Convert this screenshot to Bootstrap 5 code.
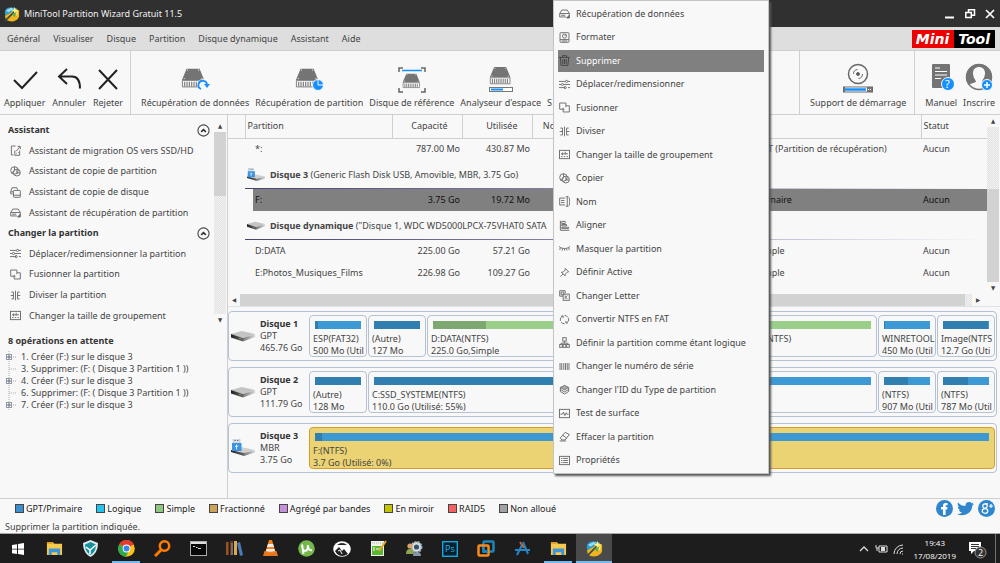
<!DOCTYPE html>
<html lang="fr">
<head>
<meta charset="utf-8">
<meta name="viewport" content="width=device-width, initial-scale=1">
<title>MiniTool Partition Wizard Gratuit 11.5</title>
<link href="https://cdn.jsdelivr.net/npm/bootstrap@5.3.0/dist/css/bootstrap.min.css" rel="stylesheet">
<style>
  :root { --ink: #444; --line: #cfcfcf; --paper: #f8f8f8; --frame: #b4c2d6; }
  body { font-family: "Noto Sans", "DejaVu Sans Condensed", sans-serif; font-size: 9px; line-height: 12px; color: var(--ink); background: var(--paper); }
  button { background: none; border: 0; padding: 0; color: inherit; font: inherit; white-space: nowrap; }
  svg { display: block; flex: none; }
  a { color: inherit; text-decoration: none; }
  .title-bar { background: #303030; color: #f2f2f2; height: 27px; }
  .menu-bar { background: #dedede; height: 24px; gap: 13px; padding: 0 5px 0 7px; border-bottom: 1px solid var(--line); }
  .brand { font: italic bold 14px/18px "DejaVu Sans", sans-serif; color: #fff; }
  .brand span { padding: 0 5px 0 4px; }
  .brand-red { background: #ec0000; }
  .brand-black { background: #000; }
  .tool-bar { height: 64px; border-bottom: 1px solid var(--line); }
  .tool-set { border-right: 1px solid var(--line); }
  .tool-first { padding: 0 7px 0 4px; gap: 7px; }
  .tool-mid { padding-left: 10px; gap: 6px; }
  .tool-end { padding: 0 8px 0 10px; }
  .tool-last { padding: 0 5px 0 10px; gap: 6px; }
  .tool-btn { display: flex; flex-direction: column; align-items: center; justify-content: flex-end; padding-bottom: 5px; gap: 4px; }
  .side { width: 228px; border-right: 1px solid var(--line); }
  .side-scroll { height: 206px; margin-top: 5px; }
  .side-row { display: flex; align-items: center; flex: 1; padding: 0 4px 0 8px; gap: 8px; }
  .side-row .glyph { margin-left: 2px; }
  .side-row .fold-icon { width: 13px; height: 13px; }
  .side h2, .side h3 { font-size: 9px; line-height: 12px; font-weight: bold; margin: 0; color: #333; }
  .side h3 { padding: 9px 8px 4px; }
  .track { background: repeating-conic-gradient(#e2e2e2 0 25%, #f2f2f2 0 50%) 0 0/2px 2px; }
  .thumb { background: #d2d2d2; }
  .v-bar { width: 12px; display: flex; flex-direction: column; }
  .v-bar-main { margin-right: 1px; }
  .arrow { display: flex; align-items: center; justify-content: center; width: 12px; height: 12px; font-size: 6px; flex: none; }
  .ops { list-style: none; margin: 0; padding: 0 0 0 5px; }
  .ops li { display: flex; gap: 4px; align-items: center; }
  .part-table { table-layout: fixed; margin: 0 0 10px; color: var(--ink); --bs-table-bg: transparent; }
  .part-table th, .part-table td { padding: 0 2px; border: 0; height: 22px; vertical-align: middle; white-space: nowrap; overflow: hidden; color: inherit; font-weight: normal; }
  .part-table thead th { border-right: 1px solid var(--line); border-bottom: 1px solid var(--line); height: 23px; }
  .part-table thead th:last-child { border-right: 0; }
  .part-table thead .plain { border-right: 0; }
  .part-table .num { text-align: right; }
  .part-table thead .num { padding-right: 14px; }
  .part-table .kind { padding-left: 7px; }
  .part-table .group td { height: 29px; background: linear-gradient(90deg, #45436f, #8884b0 45%, #d5d5e6 80%, #f8f8f8) left bottom/100% 1px no-repeat; box-shadow: none; overflow: visible; }
  .part-table .group td:first-child { background: none; }
  .part-table .chosen { color: #111; }
  .part-table .chosen td:nth-child(n+3) { background: #808080; }
  .drive-line { gap: 5px; }
  .maps { gap: 6px; padding: 4px 3px 0 0; }
  .disk { height: 50px; border: 1px solid var(--frame); border-radius: 4px; padding: 3px 1px 3px 2px; }
  .disk-info { width: 78px; gap: 5px; flex: none; }
  .disk-info b { color: #333; }
  .vols { flex: 1; min-width: 0; gap: 1px; }
  .vol { border: 1px solid var(--frame); border-radius: 4px; padding: 5px 3px 0; overflow: hidden; white-space: nowrap; }
  .vol-small { width: 58px; flex: none; }
  .vol-wide { flex: 1 1 0; min-width: 0; }
  .vol-active { background: #ebd273; border-color: #d99c22; }
  .usage { height: 8px; margin: 0 2px 4px; background: #3d99d4; }
  .usage div { height: 8px; background: #307fae; }
  .usage-simple { background: #99cf89; }
  .usage-simple div { background: #7da970; }
  .legend { height: 20px; gap: 14px; padding: 0 5px 0 15px; border-top: 1px solid var(--line); color: #222; }
  .legend-item { display: flex; align-items: center; gap: 2px; }
  .swatch { width: 9px; height: 9px; border: 1px solid #444; }
  .status-line { height: 16px; padding: 2px 0 0 5px; border-bottom: 1px solid #aaa; }
  .task-bar { background: #1d1d1d; height: 29px; color: #fff; font-family: "Open Sans", sans-serif; font-size: 8px; line-height: 13px; }
  .task-btn { width: 36px; flex: none; display: flex; align-items: center; justify-content: center; padding: 0 4px; }
  .task-open { background: linear-gradient(#76b9ed, #76b9ed) center bottom/28px 2px no-repeat; }
  .task-now { background: linear-gradient(#76b9ed, #76b9ed) center bottom/36px 2px no-repeat #4a4a4a; }
  .context.show { position: absolute; left: 553px; top: 0; width: 216px; height: 474px; display: flex; flex-direction: column; padding: 1px 4px; background: var(--paper); border: 1px solid #c4c4c4; border-radius: 0; box-shadow: 2px 2px 2px #555; font-size: 9px; color: var(--ink); }
  .context li { flex: 1; display: flex; align-items: center; }
  .context .dropdown-item { display: flex; align-items: center; gap: 6px; height: 22px; padding: 0 1px; color: var(--ink); }
  .context .dropdown-item.active { background: #808080; color: #fff; }
  .glyph { width: 11px; height: 11px; fill: none; stroke: #6e6e6e; stroke-width: 1.4; }
  .active .glyph { stroke: #444; }
</style>
</head>
<body class="d-flex flex-column min-vh-100 overflow-hidden">
<svg width="0" height="0" class="position-absolute" aria-hidden="true">
  <defs>
    <linearGradient id="metal"><stop stop-color="#777"/><stop offset="1" stop-color="#d8d8d8"/></linearGradient>
    <linearGradient id="front"><stop stop-color="#222"/><stop offset="1" stop-color="#666"/></linearGradient>
    <symbol id="i-recover" viewBox="0 0 16 16"><path d="M1 8 4 3h8l3 5M1 8h14M1 8v5h9M15 8v4M3 10.500h6"/><path d="M11 14.500l4-4v4z" fill="#555"/></symbol>
    <symbol id="i-format" viewBox="0 0 16 16"><rect x="1.500" y="1" width="13" height="14" rx="1"/><circle cx="8" cy="6" r="3"/><path d="M8 6l2-2M1.500 11h13M4 13h8"/></symbol>
    <symbol id="i-trash" viewBox="0 0 16 16"><path d="M0 3.500h16M5 3V1h6v2M2 4l1 11h10l1-11M5.500 6v7M8 6v7M10.500 6v7"/></symbol>
    <symbol id="i-slide" viewBox="0 0 16 16"><path d="M0 3.500h9M13 3.500h3M0 8h3M7 8h9M0 12.500h9M13 12.500h3"/><circle cx="11" cy="3.500" r="1.600"/><circle cx="5" cy="8" r="1.600"/><circle cx="9" cy="12.500" r="1.600"/></symbol>
    <symbol id="i-merge" viewBox="0 0 16 16"><path d="M1 1.500h9v4h5v9H6v-4H1zM6 8.500v2h2M10 5.500v2"/></symbol>
    <symbol id="i-split" viewBox="0 0 16 16"><path d="M8 1v14M2 3h3v10H2M14 3h-3v10h3M1 8h4M11 8h4"/></symbol>
    <symbol id="i-cluster" viewBox="0 0 16 16"><rect x=".7" y="2" width="14.600" height="12"/><path d="M3 7h10M5 5v4M9 4v4M3 11h2M7 11h2M11 11h2"/></symbol>
    <symbol id="i-copy" viewBox="0 0 16 16"><circle cx="6.500" cy="6.500" r="5.500"/><circle cx="10" cy="9.500" r="5"/><path d="M6.500 1v6l-4 3M10 5v5h5"/></symbol>
    <symbol id="i-disks" viewBox="0 0 16 16"><path d="M4 10H1V7l2-6h7l1 3"/><rect x="5" y="5" width="10" height="10" rx="1"/><path d="M5 12h10M1 7h4"/></symbol>
    <symbol id="i-migrate" viewBox="0 0 16 16"><path d="M8 1.500H2v13h3M7 8v7h7V8M9 12h1M12 11h1M9 9l5-6M11 2h4v4"/></symbol>
    <symbol id="i-name" viewBox="0 0 16 16"><path d="M9 3H1v10h8M3 6.500h5M3 9.500h5M10 1h4M10 15h4M12 1v14M14 3h1.500v10H14"/></symbol>
    <symbol id="i-align" viewBox="0 0 16 16"><path d="M2 1v14h13M4 2h5v3H4zM4 6.500h7v2H4zM4 10.500h10v2H4z"/></symbol>
    <symbol id="i-hide" viewBox="0 0 16 16"><path d="M0 5c4 4 12 4 16 0M2 7l-1 3M5 8l-.5 3M8 8.500V11M11 8l.5 3M14 7l1 3"/></symbol>
    <symbol id="i-pin" viewBox="0 0 16 16"><path d="M9 2l5 5-2 .5-3 3V13L3.500 7.500H6l3-3zM6 10l-4 4"/></symbol>
    <symbol id="i-letter" viewBox="0 0 16 16"><path d="M6 9H1V1h8v4M3 3h4v4H3z"/><rect x="6" y="6" width="9" height="9"/><path d="M9 8v5M12 8l-2 2.500 2 2.500"/></symbol>
    <symbol id="i-cycle" viewBox="0 0 16 16"><path d="M2 10A6 6 0 0 1 5 3M3 3h3v3M14 6a6 6 0 0 1-3 7M13 13h-3v-3M8 2a6 6 0 0 1 5 3M8 14a6 6 0 0 1-5-2"/></symbol>
    <symbol id="i-tree" viewBox="0 0 16 16"><rect x="5.500" y="1" width="5" height="5"/><path d="M8 6v3M3 11V9h10v2"/><rect x="1" y="11" width="4" height="4"/><rect x="6" y="11" width="4" height="4"/><rect x="11" y="11" width="4" height="4"/></symbol>
    <symbol id="i-bars" viewBox="0 0 16 16"><path d="M1.500 3v10M4 3v10M7 3v10M9.500 3v10M12 3v10M14.500 3v10"/></symbol>
    <symbol id="i-layers" viewBox="0 0 16 16"><path d="M8 2l6 3-6 3.500L2 5z" fill="#aaa"/><path d="M2 8l6 3.500L14 8M2 11l6 3.500 6-3.500M2 5v6M14 5v6"/></symbol>
    <symbol id="i-surface" viewBox="0 0 16 16"><rect x=".7" y="2" width="14.600" height="12"/><path d="M2 9h3l1.500-3 2 5 2-4 1 2H14"/></symbol>
    <symbol id="i-wipe" viewBox="0 0 16 16"><path d="M9 2l6 3-6 8H4l-2-3zM5 6l6 4M1 14.500h9"/></symbol>
    <symbol id="i-props" viewBox="0 0 16 16"><rect x=".7" y="2" width="14.600" height="12"/><path d="M3 5h2M6 5h7M3 8h2M6 8h7M3 11h2M6 11h7"/></symbol>
    <symbol id="i-fold" viewBox="0 0 14 14"><circle cx="7" cy="7" r="6" stroke="#444" stroke-width="1.200"/><path d="M4.500 8.500 7 6l2.500 2.500" stroke="#333" stroke-width="1.800"/></symbol>
    <symbol id="i-plus" viewBox="0 0 12 12"><path d="M8 6h4M4 0v3M4 10v2" stroke="#aaa" stroke-dasharray="1 1"/><rect x="1.500" y="3.500" width="5" height="5" fill="#fff" stroke="#999"/><path d="M2 6h4M4 4v4" stroke="#5564a0"/></symbol>
    <symbol id="i-leaf" viewBox="0 0 12 12"><path d="M4 0v12M4 6h8" stroke="#aaa" stroke-dasharray="1 1"/></symbol>
    <symbol id="i-hdd" viewBox="0 0 24 12"><path d="M0 4 11 1l13 3-12 4z" fill="#c4c4c4"/><path d="M0 4l12 4v3.500L0 7.500z" fill="url(#front)"/><path d="M12 8l12-4v3l-12 4.500z" fill="url(#metal)"/><path d="M8 8.500h2" stroke="#4fae4a"/></symbol>
    <symbol id="i-usb" viewBox="0 0 24 18"><path d="M0 10l10-2 14 3-11 3z" fill="#cfcfcf"/><path d="M0 11l13 3v3L0 13z" fill="url(#front)"/><path d="M13 14l11-3v2.500L13 17z" fill="url(#metal)"/><rect x="2" y="0" width="7" height="4" fill="#d7e4ee" stroke="#a7b7c5" stroke-width=".5"/><path d="M3.500 1.500h1.200M6.200 1.500h1.200" stroke="#555"/><rect x="1" y="4" width="9.500" height="8" fill="#3f93dd"/><path d="M5.500 5.500v5M4 7l1.500 1.500L7 6.500" stroke="#d3ecff" fill="none"/></symbol>
    <symbol id="i-wizard" viewBox="0 0 18 18"><path d="M1 9c-1-9 8-8 14-6l-5 6-8 2z" fill="#2f9fd0"/><path d="M2 5l6-3 3 1-6 4z" fill="#9bdcf4"/><path d="M1 11l6-3 6-5 4 2v7c-2 6-11 7-15 3z" fill="#efb51b"/><path d="M8 8l8-3-1 6z" fill="#fbe066"/><path d="M1 17 12 6" stroke="#3a4750" stroke-width="1.800"/><path d="M12 1l1 3 3 1-3 1-1 3-1-3-3-1 3-1z" fill="#fff68c"/><path d="M9 9l5-2-2 6z" fill="#5fae4b"/></symbol>
    <symbol id="i-drive" viewBox="0 0 28 24"><path d="M6 1h14l5 12H1z" fill="#747474"/><path d="M1.500 13.500h23v7h-23z" fill="#f8f8f8" stroke="#777"/><path d="M4 15v5M6.500 15v5M9 15v5M11.500 15v5M14 15v5M16.500 15v5M19 15v5M21.500 15v5" stroke="#777" stroke-width="1.200"/><path d="M6.500 2.500h1M18.500 2.500h1M3 11.500h1M22 11.500h1" stroke="#fff"/></symbol>
    <symbol id="i-folder" viewBox="0 0 18 18"><path d="M1 2h6l2 2h8v12H1z" fill="#f6c84c"/><path d="M1 2h6l1 2H1z" fill="#dc9d1b"/><path d="M3 16V9h12v7h-3v-3H6v3z" fill="#3e95d9"/></symbol>
  </defs>
</svg>

<header class="title-bar d-flex align-items-center ps-1">
  <svg width="16" height="16"><use href="#i-wizard"/></svg>
  <span class="ps-1">MiniTool Partition Wizard Gratuit 11.5</span>
  <div class="ms-auto d-flex gap-2 pe-1">
    <button aria-label="Réduire"><svg width="12" height="12" stroke="#fff" stroke-width="2"><path d="M1 9.500h9"/></svg></button>
    <button aria-label="Restaurer"><svg width="12" height="12" stroke="#fff" stroke-width="1.500" fill="none"><path d="M4.500 4V1.800h6v5.500H8M1.800 4.500h5.500v5H1.800z"/></svg></button>
    <button aria-label="Fermer"><svg width="12" height="12" stroke="#fff" stroke-width="1.700"><path d="M2 2l8 8M10 2l-8 8"/></svg></button>
  </div>
</header>

<nav class="menu-bar d-flex align-items-center">
  <button>Général</button><button>Visualiser</button><button>Disque</button><button>Partition</button><button>Disque dynamique</button><button>Assistant</button><button>Aide</button>
  <div class="brand ms-auto d-flex"><span class="brand-red">Mini</span><span class="brand-black">Tool</span></div>
</nav>

<div class="tool-bar d-flex">
  <div class="tool-set tool-first d-flex">
    <button class="tool-btn"><svg width="26" height="26" fill="none" stroke="#222" stroke-width="2"><path d="M2 13l8 8L25 5"/></svg>Appliquer</button>
    <button class="tool-btn"><svg width="26" height="26" fill="none" stroke="#222" stroke-width="2"><path d="M11 2 3 9.500l8 7.500M3 9.500h13c6 0 8 5 8 12"/></svg>Annuler</button>
    <button class="tool-btn"><svg width="26" height="26" fill="none" stroke="#222" stroke-width="2"><path d="M4 3l18 19M22 3 4 22"/></svg>Rejeter</button>
  </div>
  <div class="tool-set tool-mid d-flex flex-fill overflow-hidden">
    <button class="tool-btn"><svg width="30" height="26"><use href="#i-drive" x="1" y="0" width="26" height="24"/><circle cx="23" cy="18" r="6" fill="#f8f8f8"/><path d="M21 22a4.300 4.300 0 1 1 6-4" fill="none" stroke="#1590ff" stroke-width="1.800"/><path d="M24 17h6l-3 4z" fill="#1590ff"/></svg>Récupération de données</button>
    <button class="tool-btn"><svg width="30" height="26"><use href="#i-drive" x="1" y="0" width="26" height="24"/><circle cx="24" cy="18" r="5.500" fill="#1590ff" stroke="#f8f8f8"/><path d="M24 12v6h6" stroke="#f8f8f8" fill="none"/></svg>Récupération de partition</button>
    <button class="tool-btn"><svg width="28" height="26" fill="none"><use href="#i-drive" x="4" y="5" width="20" height="19"/><path d="M1 5V1h4M23 1h4v4M1 21v4h4M23 25h4v-4" stroke="#666" stroke-width="1.500"/><path d="M4 3.500h20" stroke="#1590ff" stroke-width="1.500"/></svg>Disque de référence</button>
    <button class="tool-btn"><svg width="26" height="26"><use href="#i-drive" x="1" y="-1" width="24" height="21"/><rect x="1.500" y="20.500" width="23" height="4" fill="#fff" stroke="#777"/><path d="M3 22.500h12" stroke="#1590ff" stroke-width="2"/></svg>Analyseur d'espace</button>
    <button class="tool-btn">S</button>
  </div>
  <div class="tool-set tool-end d-flex">
    <button class="tool-btn"><svg width="32" height="30" fill="none" stroke="#686868"><circle cx="16" cy="11" r="9.500" stroke-width="1.500"/><circle cx="16" cy="11" r="1.500" fill="#555"/><path d="M11.500 11a4.500 4.500 0 0 1 4-4.500M20.500 11a4.500 4.500 0 0 1-4 4.500"/><rect x="1.500" y="24" width="29" height="5" fill="#777"/><path d="M3 26.500h22" stroke="#fff" stroke-width="4"/><path d="M3 26.500h21" stroke="#1590ff" stroke-width="2.500"/><path d="M26 26.500h1M28 26.500h1" stroke="#fff"/></svg>Support de démarrage</button>
  </div>
  <div class="tool-last d-flex">
    <button class="tool-btn"><svg width="26" height="30"><rect x="4" y="1" width="18" height="24" rx="1" fill="#747474"/><path d="M7 5h5M7 8.500h12M7 12h12M7 15.500h6" stroke="#fff"/><circle cx="20" cy="21" r="6.500" fill="#1590ff" stroke="#f8f8f8"/><text x="17" y="25" fill="#fff" font-size="11">?</text></svg>Manuel</button>
    <button class="tool-btn"><svg width="28" height="30"><circle cx="14" cy="14" r="12.500" fill="#f8f8f8" stroke="#747474" stroke-width="1.500"/><path d="M14 1a13 13 0 0 0-10 21c2-2 5-2 7-3 0-2-3-4-3-9 0-8 12-8 12 0 0 5-3 7-3 9l7 3A13 13 0 0 0 14 1z" fill="#747474"/><circle cx="22" cy="22" r="5.500" fill="#1590ff" stroke="#f8f8f8"/><path d="M19 22h6M22 19v6" stroke="#fff" stroke-width="1.500"/></svg>Inscrire</button>
  </div>
</div>

<main class="d-flex flex-fill">
  <aside class="side flex-shrink-0">
    <div class="side-scroll d-flex">
      <div class="d-flex flex-column flex-fill">
        <div class="side-row justify-content-between"><h2>Assistant</h2><button aria-label="Replier Assistant"><svg class="glyph fold-icon"><use href="#i-fold"/></svg></button></div>
        <button class="side-row"><svg class="glyph"><use href="#i-migrate"/></svg>Assistant de migration OS vers SSD/HD</button>
        <button class="side-row"><svg class="glyph"><use href="#i-copy"/></svg>Assistant de copie de partition</button>
        <button class="side-row"><svg class="glyph"><use href="#i-disks"/></svg>Assistant de copie de disque</button>
        <button class="side-row"><svg class="glyph"><use href="#i-recover"/></svg>Assistant de récupération de partition</button>
        <div class="side-row justify-content-between"><h2>Changer la partition</h2><button aria-label="Replier Changer la partition"><svg class="glyph fold-icon"><use href="#i-fold"/></svg></button></div>
        <button class="side-row"><svg class="glyph"><use href="#i-slide"/></svg>Déplacer/redimensionner la partition</button>
        <button class="side-row"><svg class="glyph"><use href="#i-merge"/></svg>Fusionner la partition</button>
        <button class="side-row"><svg class="glyph"><use href="#i-split"/></svg>Diviser la partition</button>
        <button class="side-row"><svg class="glyph"><use href="#i-cluster"/></svg>Changer la taille de groupement</button>
      </div>
      <div class="v-bar v-bar-main"><span class="arrow">▲</span><div class="track flex-fill"><div class="thumb" style="height:35%"></div></div><span class="arrow">▼</span></div>
    </div>
    <h3>8 opérations en attente</h3>
    <ul class="ops">
      <li><svg width="12" height="12" fill="none"><use href="#i-plus"/></svg>1. Créer (F:) sur le disque 3</li>
      <li><svg width="12" height="12" fill="none"><use href="#i-leaf"/></svg>3. Supprimer: (F: ( Disque 3 Partition 1 ))</li>
      <li><svg width="12" height="12" fill="none"><use href="#i-plus"/></svg>4. Créer (F:) sur le disque 3</li>
      <li><svg width="12" height="12" fill="none"><use href="#i-leaf"/></svg>6. Supprimer: (F: ( Disque 3 Partition 1 ))</li>
      <li><svg width="12" height="12" fill="none"><use href="#i-plus"/></svg>7. Créer (F:) sur le disque 3</li>
    </ul>
  </aside>

  <section class="flex-fill overflow-hidden">
    <div class="d-flex">
      <div class="flex-fill overflow-hidden">
        <table class="table part-table">
          <colgroup><col style="width:17px"><col style="width:8px"><col style="width:139px"><col style="width:70px"><col style="width:70px"><col style="width:70px"><col style="width:147px"><col><col style="width:66px"></colgroup>
          <thead><tr><th></th><th colspan="2">Partition</th><th class="num">Capacité</th><th class="num">Utilisée</th><th class="ps-2 plain">&nbsp;Non</th><th></th><th></th><th>Statut</th></tr></thead>
          <tbody>
            <tr><td></td><td></td><td>*:</td><td class="num">787.00 Mo</td><td class="num">430.87 Mo</td><td></td><td></td><td class="kind">GPT (Partition de récupération)</td><td>Aucun</td></tr>
            <tr class="group"><td></td><td colspan="8"><div class="drive-line d-flex align-items-center"><svg width="18" height="14"><use href="#i-usb"/></svg><span><b>Disque 3</b> (Generic Flash Disk USB, Amovible, MBR, 3.75 Go)</span></div></td></tr>
            <tr class="chosen"><td></td><td></td><td>F:</td><td class="num">3.75 Go</td><td class="num">19.72 Mo</td><td></td><td></td><td class="kind">Primaire</td><td>Aucun</td></tr>
            <tr class="group"><td></td><td colspan="8"><div class="drive-line d-flex align-items-center"><svg width="18" height="9"><use href="#i-hdd"/></svg><span><b>Disque dynamique</b> ("Disque 1, WDC WD5000LPCX-75VHAT0 SATA</span></div></td></tr>
            <tr><td></td><td></td><td>D:DATA</td><td class="num">225.00 Go</td><td class="num">57.21 Go</td><td></td><td></td><td class="kind">Simple</td><td>Aucun</td></tr>
            <tr><td></td><td></td><td>E:Photos_Musiques_Films</td><td class="num">226.98 Go</td><td class="num">109.27 Go</td><td></td><td></td><td class="kind">Simple</td><td>Aucun</td></tr>
          </tbody>
        </table>
      </div>
      <div class="v-bar v-bar-main"><span class="arrow">▲</span><div class="track flex-fill d-flex align-items-end"><div class="thumb w-100" style="height:60%"></div></div><span class="arrow">▼</span></div>
    </div>
    <div class="d-flex align-items-center border-bottom pe-3">
      <span class="arrow">◀</span><div class="track flex-fill"><div class="thumb" style="width:99%;height:12px"></div></div><span class="arrow">▶</span>
    </div>

    <div class="maps d-flex flex-column">
      <div class="disk d-flex">
        <div class="disk-info d-flex align-items-center"><svg width="24" height="12"><use href="#i-hdd"/></svg><div><b>Disque 1</b><br>GPT<br>465.76 Go</div></div>
        <div class="d-flex vols">
          <div class="vol vol-small"><div class="usage"><div style="width:6%"></div></div>ESP(FAT32)<br>500 Mo (Util</div>
          <div class="vol vol-small"><div class="usage"><div style="width:100%"></div></div>(Autre)<br>127 Mo</div>
          <div class="vol vol-wide"><div class="usage usage-simple"><div style="width:25%"></div></div>D:DATA(NTFS)<br>225.0 Go,Simple</div>
          <div class="vol vol-wide"><div class="usage usage-simple"><div style="width:48%"></div></div>E:Photos_Musiques_Films(NTFS)</div>
          <div class="vol vol-small"><div class="usage"><div style="width:3%"></div></div>WINRETOOL<br>450 Mo (Util</div>
          <div class="vol vol-small"><div class="usage"><div style="width:98%"></div></div>Image(NTFS<br>12.7 Go (Uti</div>
        </div>
      </div>
      <div class="disk d-flex">
        <div class="disk-info d-flex align-items-center"><svg width="24" height="12"><use href="#i-hdd"/></svg><div><b>Disque 2</b><br>GPT<br>111.79 Go</div></div>
        <div class="d-flex vols">
          <div class="vol vol-small"><div class="usage"><div style="width:100%"></div></div>(Autre)<br>128 Mo</div>
          <div class="vol vol-wide"><div class="usage"><div style="width:55%"></div></div>C:SSD_SYSTEME(NTFS)<br>110.0 Go (Utilisé: 55%)</div>
          <div class="vol vol-small"><div class="usage"><div style="width:52%"></div></div>(NTFS)<br>907 Mo (Util</div>
          <div class="vol vol-small"><div class="usage"><div style="width:54%"></div></div>(NTFS)<br>787 Mo (Util</div>
        </div>
      </div>
      <div class="disk d-flex">
        <div class="disk-info d-flex align-items-center"><svg width="24" height="18"><use href="#i-usb"/></svg><div><b>Disque 3</b><br>MBR<br>3.75 Go</div></div>
        <div class="d-flex vols">
          <div class="vol vol-wide vol-active"><div class="usage"><div style="width:1%"></div></div>F:(NTFS)<br>3.7 Go (Utilisé: 0%)</div>
        </div>
      </div>
    </div>
  </section>
</main>

<div class="legend d-flex align-items-center">
  <span class="legend-item"><i class="swatch" style="background:#3b8fcb"></i>GPT/Primaire</span>
  <span class="legend-item"><i class="swatch" style="background:#24c4ea"></i>Logique</span>
  <span class="legend-item"><i class="swatch" style="background:#90c67f"></i>Simple</span>
  <span class="legend-item"><i class="swatch" style="background:#cba35a"></i>Fractionné</span>
  <span class="legend-item"><i class="swatch" style="background:#c58fdc"></i>Agrégé par bandes</span>
  <span class="legend-item"><i class="swatch" style="background:#c4c400"></i>En miroir</span>
  <span class="legend-item"><i class="swatch" style="background:#f86161"></i>RAID5</span>
  <span class="legend-item"><i class="swatch" style="background:#a2a2a2"></i>Non alloué</span>
  <div class="ms-auto d-flex gap-1">
    <a href="#" aria-label="Facebook"><svg width="17" height="17"><circle cx="8.500" cy="8.500" r="8.500" fill="#2f86cc"/><path d="M7 15V9.500H5V7h2V5.500Q7 3 9.500 3H11.500v2.300h-1Q9.600 5.300 9.600 6v1H11.500l-.4 2.500H9.600V15z" fill="#fff"/></svg></a>
    <a href="#" aria-label="Twitter"><svg width="17" height="17"><path d="M1 2.500Q4 6 8.500 6C8 2 13 1 14.500 3.200l2-.8-1.200 2 1.700-.4-1.800 2C15 13 7 17.500 0 14q3 .2 5-1.500-2.500-.4-3-2.500h1.300Q.7 9 .7 6.500l1.500.4Q0 5 1 2.500z" fill="#2f86cc"/></svg></a>
    <a href="#" aria-label="Google+"><svg width="17" height="17" fill="none" stroke="#fff" stroke-width="1.200"><circle cx="8.500" cy="8.500" r="8.500" fill="#2f86cc" stroke="none"/><circle cx="7" cy="6" r="2.200"/><ellipse cx="7" cy="11" rx="2.800" ry="2.300"/><path d="M7 3.800h3M11 6h4M13 4v4"/></svg></a>
  </div>
</div>
<div class="status-line d-flex align-items-center">Supprimer la partition indiquée.</div>

<footer class="task-bar d-flex">
  <button class="task-btn" aria-label="Démarrer"><svg width="12" height="12" fill="#fff"><path d="M0 2l5-.8v4.500H0zM6 1l6-1v5.700H6zM0 6.500h5V11l-5-.8zM6 6.500h6V12l-6-1z"/></svg></button>
  <button class="task-btn" aria-label="Dossiers"><svg width="17" height="17"><use href="#i-folder"/></svg></button>
  <button class="task-btn" aria-label="Protection"><svg width="17" height="17"><path d="M8.500 0 16 3q0 10-7.500 14Q1 13 1 3z" fill="#dfeaf0"/><path d="M8.500 2 14 4.500q0 7.500-5.500 10.500Q3 12 3 4.500z" fill="#14919f"/><path d="M4 7l4 3 6-5M8 10v4" stroke="#fff" stroke-width="1.500" fill="none"/></svg></button>
  <button class="task-btn task-open" aria-label="Chrome"><svg width="17" height="17"><circle cx="8.500" cy="8.500" r="8.300" fill="#fbc116"/><path d="M8.500 8.500 1.300 4.300A8.300 8.300 0 0 1 15.700 4.300z" fill="#e33b2e"/><path d="M1.300 4.300A8.300 8.300 0 0 0 8 16.800L11 10z" fill="#2da94f"/><path d="M1.300 4.300A8.300 8.300 0 0 1 16 4.800H8z" fill="#e33b2e"/><circle cx="8.500" cy="8.500" r="3.900" fill="#fff"/><circle cx="8.500" cy="8.500" r="3" fill="#3f84ee"/></svg></button>
  <button class="task-btn" aria-label="Recherche"><svg width="17" height="17" fill="none" stroke="#ff7b00"><circle cx="10.500" cy="6" r="4.700" stroke-width="2.500"/><path d="M7 10l-6 6" stroke-width="3"/></svg></button>
  <button class="task-btn" aria-label="Invite de commandes"><svg width="17" height="15"><rect x=".5" y=".5" width="16" height="14" fill="#080808" stroke="#aaa"/><path d="M1 2h15" stroke="#ddd" stroke-width="2"/><path d="M3 5.500h2M6 6.500h1.500M8 7.500h3" stroke="#ddd"/></svg></button>
  <button class="task-btn" aria-label="Bibliothèque"><svg width="17" height="17"><path d="M0 2h3v13H0zM4 1h3v14H4z" fill="#6b3717"/><path d="M1 2v13" stroke="#b87431"/><path d="M8 1h3v14H8z" fill="#d7a958"/><path d="M11 3l3-1 3 13-3 1z" fill="#4a79b8"/><path d="M6 3v12" stroke="#89a6b8"/></svg></button>
  <button class="task-btn" aria-label="VLC"><svg width="17" height="17"><path d="M1 16l1.500-5h12L16 16z" fill="#e8761a"/><path d="M7 0h3l3.500 12q-5 2.500-10 0z" fill="#f58220"/><path d="M6 4h5l1 3H5zM4.500 9h8l.6 2q-4.600 1.500-9.200 0z" fill="#eee"/></svg></button>
  <button class="task-btn" aria-label="µTorrent"><svg width="17" height="17"><circle cx="8.500" cy="8.500" r="8.300" fill="#74b84b"/><path d="M5.500 14 4 4.500M5 10q5 3 5-5M10 5q0 6 4 5" fill="none" stroke="#fff" stroke-width="2"/></svg></button>
  <button class="task-btn" aria-label="Photos"><svg width="18" height="16"><ellipse cx="9" cy="8" rx="8.800" ry="7.800" fill="#fff"/><path d="M2 10l4-4 3 4 2-2 4 5q-6 4-11 0zM4 4q5-4 10 0" fill="#222"/><path d="M5 10l2-1 2 4" stroke="#fff" fill="none"/></svg></button>
  <button class="task-btn" aria-label="Notes"><svg width="17" height="17"><path d="M1 1h13v15H1z" fill="#f0f3eb"/><path d="M2 6h11v9H2z" fill="#5ab632"/><path d="M2 3h11" stroke="#aaa" stroke-dasharray="1 1"/><path d="M4 7v4M6 9h2M8 9h2" stroke="#fff"/><path d="M16 1 9 11" stroke="#e8a52b" stroke-width="2"/></svg></button>
  <button class="task-btn" aria-label="Comptes"><svg width="17" height="17"><circle cx="10.500" cy="7" r="5" fill="#d9e4ec" stroke="#a9b3ba" stroke-width="2" stroke-dasharray="2 1"/><circle cx="10.500" cy="7" r="2.600" fill="#385267"/><circle cx="4" cy="6" r="2.600" fill="#d9a567"/><path d="M0 14q0-5 4-5t4 5z" fill="#8ba650"/><path d="M7 16q0-4 4-4t4 4z" fill="#8598aa"/></svg></button>
  <button class="task-btn" aria-label="Photoshop"><svg width="16" height="16"><rect x=".7" y=".7" width="14.600" height="14.600" fill="#04202d" stroke="#16a9df" stroke-width="1.400"/><text x="3" y="11" font-size="9" fill="#26b5ea">Ps</text></svg></button>
  <button class="task-btn" aria-label="VMware"><svg width="18" height="17" fill="none" stroke-width="2.500"><rect x="6.500" y="1.500" width="10" height="10" rx="1" stroke="#1c86b8"/><rect x="1.500" y="5.500" width="10" height="10" rx="1" stroke="#f68b1f"/><path d="M6.500 7v4.500H11" stroke="#1c86b8"/></svg></button>
  <button class="task-btn" aria-label="Magasin"><svg width="17" height="17" fill="none" stroke="#2484c6" stroke-width="2"><path d="M1 10h15M9 2l5 12M8 5 3 15"/><path d="M6 2l4 6" stroke="#b36b4a"/></svg></button>
  <button class="task-btn task-open" aria-label="Explorateur"><svg width="17" height="17"><use href="#i-folder"/></svg></button>
  <button class="task-btn task-now" aria-label="Partition Wizard"><svg width="17" height="17"><use href="#i-wizard"/></svg></button>
  <div class="ms-auto d-flex align-items-center">
    <svg width="50" height="14" fill="none" stroke="#ddd" class="me-2"><path d="M4 9l4-4 4 4" stroke-width="1.300"/><path d="M23 4h8v6h-8zM20 3v3h3M21 6v3"/><path d="M25 7h4" stroke-width="4"/><path d="M38 12a9 9 0 0 1 9-9M41 12a6 6 0 0 1 6-6M44 12a3 3 0 0 1 3-3M46 12h1"/></svg>
    <div class="text-center me-2">19:43<br>17/08/2019</div>
    <svg width="19" height="20" class="ms-1"><path d="M1 3h12v9H6l-3 3v-3H1z" fill="#fff"/><path d="M3 5.500h8M3 7.500h8M3 9.500h5" stroke="#333"/><circle cx="12.500" cy="13.500" r="5.500" fill="#333" stroke="#999"/><text x="10" y="17" font-size="9" fill="#fff">2</text></svg>
    <span class="border-start border-secondary ms-2 pe-1 align-self-stretch"></span>
  </div>
</footer>

<ul class="dropdown-menu show context">
  <li><button class="dropdown-item"><svg class="glyph"><use href="#i-recover"/></svg>Récupération de données</button></li>
  <li><button class="dropdown-item"><svg class="glyph"><use href="#i-format"/></svg>Formater</button></li>
  <li><button class="dropdown-item active"><svg class="glyph"><use href="#i-trash"/></svg>Supprimer</button></li>
  <li><button class="dropdown-item"><svg class="glyph"><use href="#i-slide"/></svg>Déplacer/redimensionner</button></li>
  <li><button class="dropdown-item"><svg class="glyph"><use href="#i-merge"/></svg>Fusionner</button></li>
  <li><button class="dropdown-item"><svg class="glyph"><use href="#i-split"/></svg>Diviser</button></li>
  <li><button class="dropdown-item"><svg class="glyph"><use href="#i-cluster"/></svg>Changer la taille de groupement</button></li>
  <li><button class="dropdown-item"><svg class="glyph"><use href="#i-copy"/></svg>Copier</button></li>
  <li><button class="dropdown-item"><svg class="glyph"><use href="#i-name"/></svg>Nom</button></li>
  <li><button class="dropdown-item"><svg class="glyph"><use href="#i-align"/></svg>Aligner</button></li>
  <li><button class="dropdown-item"><svg class="glyph"><use href="#i-hide"/></svg>Masquer la partition</button></li>
  <li><button class="dropdown-item"><svg class="glyph"><use href="#i-pin"/></svg>Définir Active</button></li>
  <li><button class="dropdown-item"><svg class="glyph"><use href="#i-letter"/></svg>Changer Letter</button></li>
  <li><button class="dropdown-item"><svg class="glyph"><use href="#i-cycle"/></svg>Convertir NTFS en FAT</button></li>
  <li><button class="dropdown-item"><svg class="glyph"><use href="#i-tree"/></svg>Définir la partition comme étant logique</button></li>
  <li><button class="dropdown-item"><svg class="glyph"><use href="#i-bars"/></svg>Changer le numéro de série</button></li>
  <li><button class="dropdown-item"><svg class="glyph"><use href="#i-layers"/></svg>Changer l'ID du Type de partition</button></li>
  <li><button class="dropdown-item"><svg class="glyph"><use href="#i-surface"/></svg>Test de surface</button></li>
  <li><button class="dropdown-item"><svg class="glyph"><use href="#i-wipe"/></svg>Effacer la partition</button></li>
  <li><button class="dropdown-item"><svg class="glyph"><use href="#i-props"/></svg>Propriétés</button></li>
</ul>
<script src="https://cdn.jsdelivr.net/npm/bootstrap@5.3.0/dist/js/bootstrap.bundle.min.js"></script>
</body>
</html>
